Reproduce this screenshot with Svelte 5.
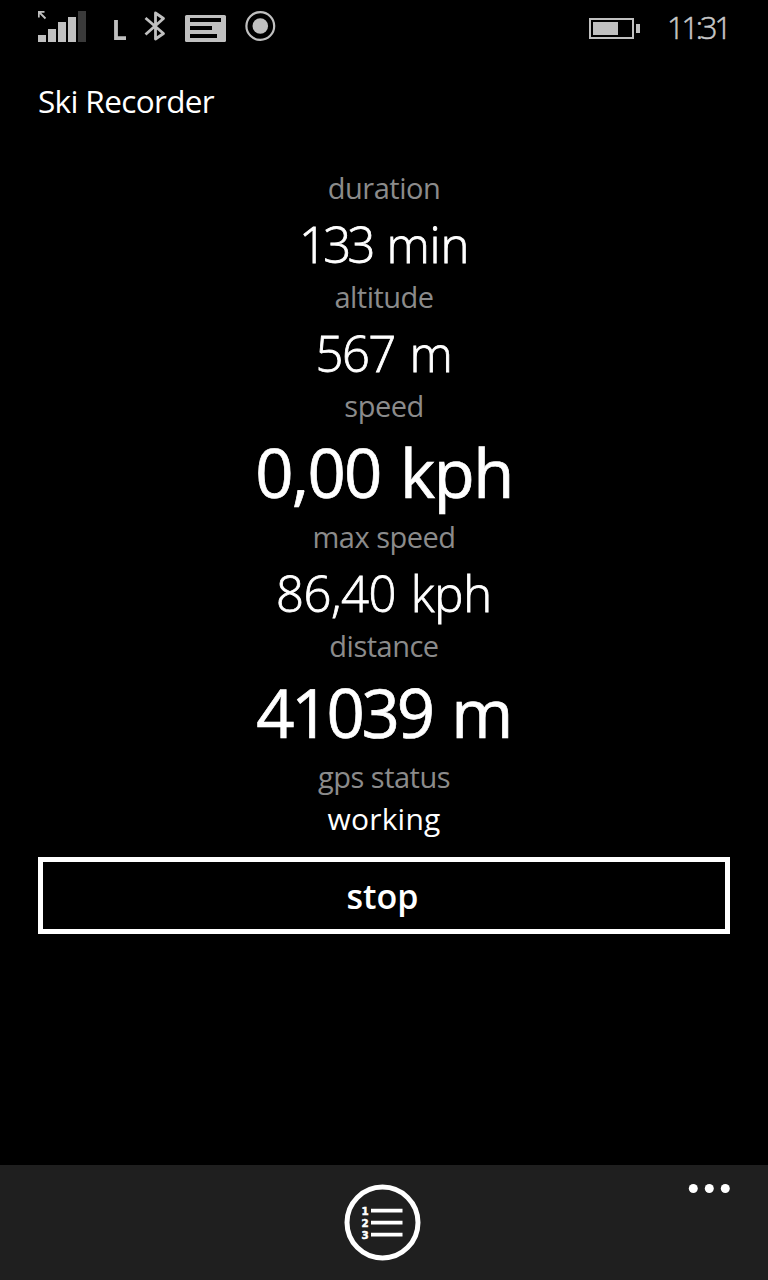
<script>
	let time = "11:31";

	// tracking is the letter spacing of the number in px
	let stats = [
		{ label: "duration", value: "133", unit: "min", size: "medium", tracking: -3.7 },
		{ label: "altitude", value: "567", unit: "m", size: "medium", tracking: -1.6 },
		{ label: "speed", value: "0,00", unit: "kph", size: "large", tracking: -1.7 },
		{ label: "max speed", value: "86,40", unit: "kph", size: "medium", tracking: -0.5 },
		{ label: "distance", value: "41039", unit: "m", size: "large", tracking: -3.2 },
		{ label: "gps status", value: "working", size: "small", tracking: 0.2 }
	];
</script>

<div class="phone">
	<div class="status">
		<svg class="icons" width="250" height="40" viewBox="38 5 250 40">
			<!-- signal -->
			<g fill="#c0c0c0">
				<path d="M38 35h8v7h-8zM48 29h8v13h-8zM58 22h8v20h-8zM68 17h8v25h-8z" />
				<path fill="#3a3a3a" d="M78 11h8v31h-8z" />
			</g>
			<path d="M38.8 17.500V11.800H44.500M39 12L45.500 18.500" fill="none" stroke="#c0c0c0" stroke-width="1.800" />
			<path d="M116 20V38.200H126" fill="none" stroke="#c0c0c0" stroke-width="3.800" />
			<!-- bluetooth -->
			<path d="M145.500 18L163.500 33.500L155.500 39V13L163.500 18.500L145.500 34.500" fill="none" stroke="#c0c0c0" stroke-width="2.800" stroke-linejoin="round" />
			<rect x="185" y="15" width="41" height="27" rx="1.500" fill="#c0c0c0" />
			<path d="M190 18h31v4h-31zM190 26h22v4h-22zM190 34h27v4h-27z" fill="#000" />
			<circle cx="260.300" cy="26" r="13.900" fill="none" stroke="#c0c0c0" stroke-width="2.200" />
			<circle cx="260.300" cy="26" r="7.800" fill="#c0c0c0" />
		</svg>
		<svg class="battery" width="52" height="22" viewBox="0 0 52 22">
			<path d="M1 1h43v19H1z" fill="none" stroke="#c0c0c0" stroke-width="2" />
			<path d="M4 4h25v13H4zM47 6h4v9h-4z" fill="#c0c0c0" />
		</svg>
		<span class="time">{time}</span>
	</div>

	<h1>Ski Recorder</h1>

	<div class="stats">
		{#each stats as stat}
			<div class="label">{stat.label}</div>
			<div class="value {stat.size}">
				<span style="letter-spacing: {stat.tracking}px">{stat.value}</span>
				{#if stat.unit}
					<span class="unit">{stat.unit}</span>
				{/if}
			</div>
		{/each}
	</div>

	<button>stop</button>

	<footer>
		<div class="side"></div>
		<svg class="list" width="78" height="78" viewBox="0 0 78 78">
			<circle cx="38.500" cy="39.500" r="35.500" fill="none" stroke="#fff" stroke-width="5" />
			<path d="M27 27.700h31.500M27 39.700h31.500M27 51.700h31.500" stroke="#fff" stroke-width="3.800" />
			<g class="num" fill="#fff">
				<text x="17.500" y="31.500">1</text>
				<text x="17.500" y="43.500">2</text>
				<text x="17.500" y="55.500">3</text>
			</g>
		</svg>
		<div class="side">
			<svg class="dots" width="42" height="10" viewBox="0 0 42 10" fill="#fff">
				<circle cx="5.300" cy="5.500" r="4.500" />
				<circle cx="21.300" cy="5.500" r="4.500" />
				<circle cx="37.300" cy="5.500" r="4.500" />
			</svg>
		</div>
	</footer>
</div>

<style>
	:global(body) {
		background: #000;
	}

	.phone {
		display: flex;
		flex-direction: column;
		height: 1280px;
		background: #000;
		color: #fff;
		font-family: "Open Sans", "Noto Sans", sans-serif;
	}

	.status {
		display: flex;
		height: 56px;
		padding: 0 0 0 38px;
	}

	.status svg {
		flex: none;
	}

	.icons {
		margin-top: 5px;
	}

	.battery {
		margin: 18px 0 0 301px;
	}

	.time {
		margin-left: 26px;
		font-size: 30.5px;
		font-weight: 300;
		line-height: 54px;
		letter-spacing: -3px;
		color: #c8c8c8;
		-webkit-text-stroke: 0.5px #c8c8c8;
		white-space: nowrap;
	}

	h1 {
		margin: 24px 38px 0;
		font-size: 31.5px;
		font-weight: 400;
		line-height: 42px;
		letter-spacing: -0.65px;
	}

	.stats {
		margin-top: 45px;
		text-align: center;
	}

	.label {
		font-size: 29px;
		line-height: 42px;
		letter-spacing: -0.5px;
		color: #8b8b8b;
	}

	.medium {
		margin-bottom: -3px;
		font-size: 49px;
		font-weight: 300;
		line-height: 70px;
		word-spacing: 2px;
		-webkit-text-stroke: 0.8px #fff;
	}

	.medium .unit {
		letter-spacing: -0.2px;
	}

	.large {
		margin-bottom: -1px;
		font-size: 67px;
		line-height: 90px;
		word-spacing: 2px;
		-webkit-text-stroke: 0.7px #fff;
	}

	.large .unit {
		letter-spacing: -1.5px;
	}

	.small {
		font-size: 30px;
		line-height: 42px;
	}

	button {
		height: 77px;
		margin: 17px 38px 0;
		padding: 1px 3px 0 0;
		border: 5px solid #fff;
		background: #000;
		color: #fff;
		font-family: inherit;
		font-size: 34px;
		font-weight: 600;
	}

	footer {
		display: flex;
		justify-content: space-between;
		height: 97px;
		margin-top: auto;
		padding: 18px 38px 0;
		background: #1f1f1f;
	}

	.side {
		width: 42px;
	}

	.dots {
		display: block;
	}

	.list {
		margin-right: 3px;
	}

	.num {
		font-family: "DejaVu Sans", sans-serif;
		font-size: 10.3px;
		font-weight: 700;
		stroke: #fff;
		stroke-width: 0.5px;
	}
</style>
